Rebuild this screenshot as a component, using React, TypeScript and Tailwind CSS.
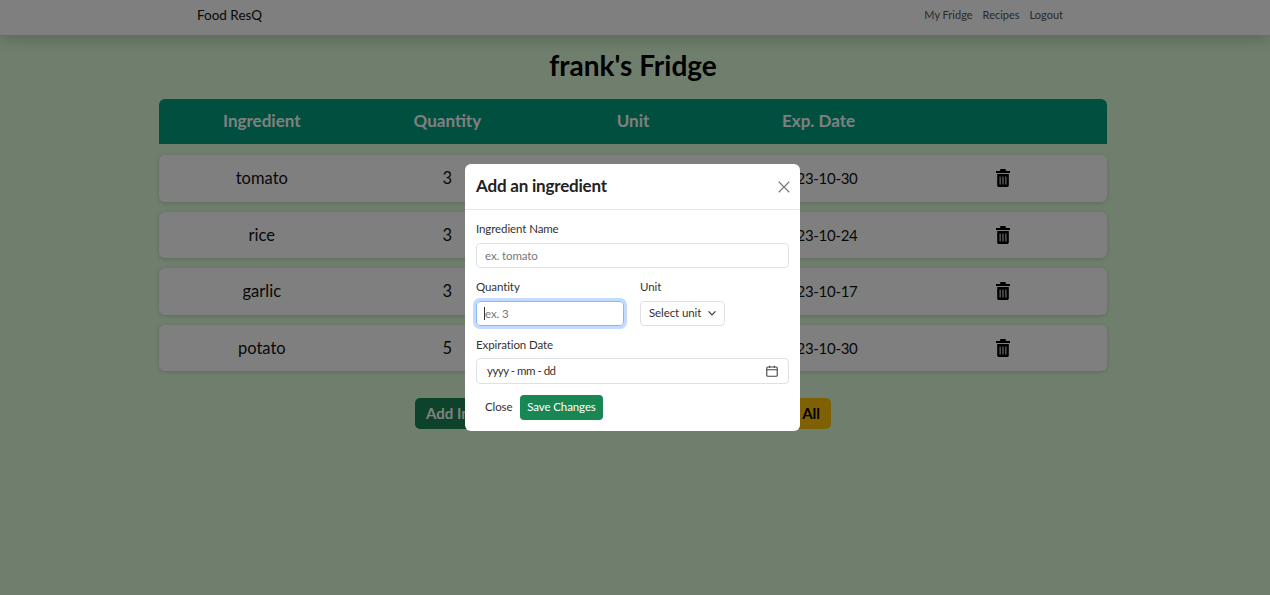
import React from 'react';

const ingredients = [
  { name: 'tomato', quantity: 3, unit: 'whole', date: '2023-10-30' },
  { name: 'rice', quantity: 3, unit: 'cups', date: '2023-10-24' },
  { name: 'garlic', quantity: 3, unit: 'whole', date: '2023-10-17' },
  { name: 'potato', quantity: 5, unit: 'whole', date: '2023-10-30' },
];

function TrashIcon() {
  return (
    <svg width="14" height="18" viewBox="0 0 14 18" className="text-black">
      <path
        fill="currentColor"
        fillRule="evenodd"
        d="M4.5 0h5l.6 2H14v2H0V2h3.9zM1.2 5h11.6v11.6c0 .8-.6 1.4-1.4 1.4H2.6c-.8 0-1.4-.6-1.4-1.4zM3.6 7.5v8h1v-8zM6.5 7.5v8h1v-8zM9.4 7.5v8h1v-8z"
      />
    </svg>
  );
}

function Navbar() {
  return (
    <nav className="h-[35px] bg-white shadow-[0_4px_16px_rgba(0,0,0,0.18)] flex items-center justify-between pl-[197px] pr-[207px] pb-[4px]">
      <a className="text-[13.5px] text-[#111]">Food ResQ</a>
      <div className="flex gap-[10px] text-[11px] text-[#555]">
        <a>My Fridge</a>
        <a>Recipes</a>
        <a>Logout</a>
      </div>
    </nav>
  );
}

function FridgeTable() {
  return (
    <div className="w-[948px] mx-auto">
      <div className="h-[45px] bg-[#009f7f] rounded-t-[6px] grid grid-cols-5 px-[10px] items-center text-center text-[17px] font-bold text-white">
        <div className="pb-[1px]">Ingredient</div>
        <div className="pb-[1px]">Quantity</div>
        <div className="pb-[1px]">Unit</div>
        <div className="pb-[1px]">Exp. Date</div>
        <div />
      </div>
      <div className="mt-[11px] flex flex-col gap-[10px]">
        {ingredients.map((item) => (
          <div
            key={item.name}
            className="h-[46.6px] bg-white rounded-[6px] shadow-[0_1px_4px_rgba(0,0,0,0.15)] grid grid-cols-5 px-[10px] items-center text-center text-[16.5px] text-[#111]"
          >
            <div>{item.name}</div>
            <div>{item.quantity}</div>
            <div>{item.unit}</div>
            <div className="text-[15px] tracking-[-0.3px]">{item.date}</div>
            <div className="flex justify-center pr-[3px]">
              <TrashIcon />
            </div>
          </div>
        ))}
      </div>
      <div className="mt-[27px] ml-[256px] w-[416px] flex justify-between">
        <button className="h-[31px] px-[11px] pb-[1px] w-[150px] text-left rounded-[5px] bg-[#198754] text-white font-bold text-[15px]">
          Add Ingredient
        </button>
        <button className="h-[31px] px-[11px] pb-[1px] w-[150px] text-right rounded-[5px] bg-[#ffc107] text-black font-bold text-[15px]">
          Delete All
        </button>
      </div>
    </div>
  );
}

function AddIngredientModal() {
  return (
    <div className="absolute inset-0 bg-black/50">
      <div className="absolute left-[465px] top-[164px] w-[335px] h-[267px] bg-white rounded-[6px] text-[#333] text-[11.5px] tracking-[-0.1px]">
        <div className="h-[46px] pl-[11px] pr-[10px] flex items-center justify-between border-b border-[#e6e6e6]">
          <h5 className="pb-[2px] text-[17px] font-bold tracking-[-0.2px] text-[#222]">Add an ingredient</h5>
          <svg width="12" height="12" viewBox="0 0 16 16" className="mt-[1px] text-[#777]">
            <path d="M1 1l14 14M15 1L1 15" stroke="currentColor" strokeWidth="1.6" fill="none" />
          </svg>
        </div>
        <div className="px-[11px] pt-[11px]">
          <label className="block leading-[15px]">Ingredient Name</label>
          <input
            placeholder="ex. tomato"
            className="mt-[7px] w-full h-[25px] px-[8px] pb-[1px] border border-[#dee2e6] rounded-[4px] placeholder:text-[#777]"
          />
          <div className="mt-[11px] flex gap-[16px]">
            <div className="w-[148px]">
              <label className="block leading-[15px]">Quantity</label>
              <div className="relative mt-[7px]">
                <input
                  placeholder="ex. 3"
                  className="w-full h-[25px] px-[8px] pb-[1px] border border-[#86b7fe] rounded-[4px] shadow-[0_0_0_3px_rgba(13,110,253,0.25)] placeholder:text-[#777] outline-none"
                />
                <span className="absolute left-[8px] top-[6px] h-[13px] w-px bg-[#333]" />
              </div>
            </div>
            <div>
              <label className="block leading-[15px]">Unit</label>
              <button className="mt-[7px] h-[25px] w-[85px] pl-[8px] pb-[1px] flex items-center gap-[6px] border border-[#dee2e6] rounded-[4px] text-[#333]">
                Select unit
                <svg width="10" height="10" viewBox="0 0 16 16">
                  <path d="M2.5 5.5L8 11l5.5-5.5" stroke="#333" strokeWidth="1.8" fill="none" />
                </svg>
              </button>
            </div>
          </div>
          <label className="block mt-[11px] leading-[15px]">Expiration Date</label>
          <div className="mt-[6px] h-[26px] pl-[10px] pr-[10px] flex items-center justify-between border border-[#dee2e6] rounded-[4px]">
            <span className="tracking-[-0.5px]">yyyy - mm - dd</span>
            <svg width="12" height="12" viewBox="0 0 16 16" fill="none" stroke="#444" strokeWidth="1.5">
              <rect x="1" y="2.7" width="14" height="12.3" rx="1.5" />
              <path d="M1 6.3h14M4.8 1v2.5M11.2 1v2.5" />
            </svg>
          </div>
          <div className="mt-[11px] flex items-center">
            <button className="w-[44px] pl-[9px] pb-[1px] text-left h-[25px] text-[#333]">Close</button>
            <button className="h-[25px] w-[83px] pb-[1px] rounded-[4px] bg-[#198754] text-white">Save Changes</button>
          </div>
        </div>
      </div>
    </div>
  );
}

export default function App() {
  return (
    <div className="relative h-[595px] overflow-hidden bg-[#dffcdb] font-['Lato',sans-serif]">
      <Navbar />
      <main className="w-[1266px]">
        <h1 className="mt-[10px] mb-[1px] h-[53px] leading-[40px] text-center text-[28px] font-bold text-black">
          frank's Fridge
        </h1>
        <FridgeTable />
      </main>
      <AddIngredientModal />
    </div>
  );
}
